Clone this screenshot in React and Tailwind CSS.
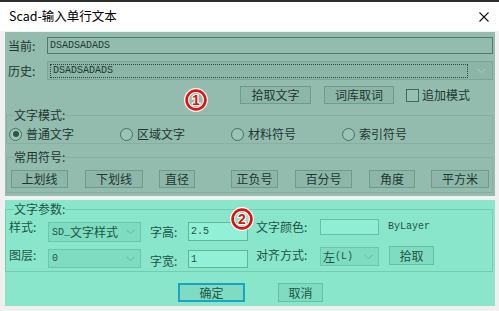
import React from 'react';

const cjk = "font-['Microsoft_YaHei','Noto_Sans_CJK_SC',sans-serif]";
const mono = "font-['Liberation_Mono',monospace]";

function Chevron({ color }) {
    return (
        <svg width="9" height="6" viewBox="0 0 9 6">
            <path d="M0.5 0.8 L4.5 4.8 L8.5 0.8" fill="none" stroke={color} strokeWidth="1" />
        </svg>
    );
}

function Marker({ n }) {
    return (
        <svg width="24" height="24" viewBox="0 0 24 24">
            <circle cx="12" cy="12" r="9.4" fill="none" stroke="#ffffff" strokeWidth="5" />
            <circle cx="12" cy="12" r="9.4" fill="none" stroke="#e3120f" strokeWidth="2.7" />
            <text
                x="12"
                y="17"
                textAnchor="middle"
                fontSize="14"
                fontWeight="700"
                fontFamily="Liberation Sans, sans-serif"
                fill="#e3120f"
                stroke="#ffffff"
                strokeWidth="2.2"
                paintOrder="stroke"
            >
                {n}
            </text>
        </svg>
    );
}

function Radio({ checked, label }) {
    return (
        <div className="flex items-center gap-[4px] h-[14px]">
            <span className="w-[13px] h-[13px] rounded-full border-[1.5px] border-[#46725f] bg-[#9cc3b6] flex items-center justify-center">
                {checked && <span className="w-[6px] h-[6px] rounded-full bg-[#2d5547]" />}
            </span>
            <span>{label}</span>
        </div>
    );
}

function TealBtn({ label, w, ml }) {
    return (
        <div
            className={`h-[18px] border border-[#6f9a8c] bg-[#8db6a9] flex items-center justify-center shrink-0 ${w} ${ml}`}
        >
            {label}
        </div>
    );
}

export default function App() {
    const symbols = [
        { label: '上划线', w: 'w-[57px]', ml: 'ml-[4px]' },
        { label: '下划线', w: 'w-[58px]', ml: 'ml-[17px]' },
        { label: '直径', w: 'w-[36px]', ml: 'ml-[16px]' },
        { label: '正负号', w: 'w-[47px]', ml: 'ml-[36px]' },
        { label: '百分号', w: 'w-[57px]', ml: 'ml-[17px]' },
        { label: '角度', w: 'w-[46px]', ml: 'ml-[17px]' },
        { label: '平方米', w: 'w-[58px]', ml: 'ml-[16px]' },
    ];

    return (
        <div className={`w-[499px] h-[311px] bg-[#f0f0f0] overflow-hidden text-[12px] ${cjk}`}>
            <div className="h-[2px] bg-[#2e2e2e]" />
            <div className="h-[29px] bg-white flex items-center justify-between pl-[9px] pr-[10px]">
                <span className="text-[12.5px] text-black">Scad-输入单行文本</span>
                <svg width="10" height="10" viewBox="0 0 10 10">
                    <path d="M0.5 0.5 L9.5 9.5 M9.5 0.5 L0.5 9.5" stroke="#111" strokeWidth="1.1" />
                </svg>
            </div>

            <div className="pl-[5px] pr-[4px] pt-[1px]">
                {/* upper panel */}
                <div className="relative h-[164px] bg-[#93bcaf] text-[#1e3730] flex flex-col">
                    <div className="flex items-center mt-[5px] h-[17px]">
                        <span className="w-[42px] pl-[3px]">当前:</span>
                        <div className={`w-[446px] h-[17px] border border-[#4e7b6b] flex items-center pl-[2px] text-[10px] text-[#1c3a30] ${mono}`}>
                            DSADSADADS
                        </div>
                    </div>
                    <div className="flex items-center mt-[7px] h-[19px]">
                        <span className="w-[42px] pl-[3px]">历史:</span>
                        <div className="w-[446px] h-[19px] border border-[#7ea497] bg-[#8cb4a7] flex items-center pl-[2px] pr-[6px]">
                            <div className={`flex-1 h-[14px] border border-dotted border-[#2a4a3f] flex items-center pl-[2px] text-[10px] text-[#1c3a30] ${mono}`}>
                                DSADSADADS
                            </div>
                            <div className="w-[18px] flex justify-end">
                                <Chevron color="#b4cbc3" />
                            </div>
                        </div>
                    </div>
                    <div className="flex items-center mt-[6px] h-[18px]">
                        <TealBtn label="拾取文字" w="w-[71px]" ml="ml-[235px]" />
                        <TealBtn label="词库取词" w="w-[70px]" ml="ml-[13px]" />
                        <span className="ml-[12px] w-[13px] h-[13px] border border-[#3f6b5c] bg-[#97c0b3]" />
                        <span className="ml-[3px]">追加模式</span>
                    </div>

                    <fieldset className="mt-[4px] ml-[1px] mr-[2px] border border-[#87b0a2] pb-[2px]">
                        <legend className="ml-[7px] leading-[14px]">文字模式:</legend>
                        <div className="grid grid-cols-[111px_111px_111px_111px] pl-[2px] mt-[5px]">
                            <Radio checked label="普通文字" />
                            <Radio label="区域文字" />
                            <Radio label="材料符号" />
                            <Radio label="索引符号" />
                        </div>
                    </fieldset>

                    <fieldset className="mt-[6px] ml-[1px] mr-[2px] border border-[#87b0a2] pb-[4px]">
                        <legend className="ml-[7px] leading-[14px]">常用符号:</legend>
                        <div className="flex items-center mt-[6px]">
                            {symbols.map((s) => (
                                <TealBtn key={s.label} label={s.label} w={s.w} ml={s.ml} />
                            ))}
                        </div>
                    </fieldset>

                    <div className="absolute left-[179px] top-[56px]">
                        <Marker n="1" />
                    </div>
                </div>

                <div className="h-[4px]" />

                {/* lower panel */}
                <div className="relative h-[106px] bg-[#89e6cb] text-[#1b5544] flex flex-col pt-[2px]">
                    <fieldset className="mr-[2px] border border-[#72cdb2] pb-[2px]">
                        <legend className="ml-[8px] leading-[14px]">文字参数:</legend>
                        <div className="flex items-start h-[23px] mt-[3px] pl-[3px]">
                            <span className="w-[39px] mt-[1px] leading-[14px]">样式:</span>
                            <div className="w-[93px] h-[20px] mt-[3px] border border-[#6cc7ac] bg-[#80dcc1] flex items-center pl-[3px] pr-[5px]">
                                <span className="flex-1 flex items-center">
                                    <span className={`text-[10px] ${mono}`}>SD_</span>
                                    <span>文字样式</span>
                                </span>
                                <Chevron color="#5fb69c" />
                            </div>
                            <span className="w-[38px] ml-[9px] mt-[6px] leading-[14px]">字高:</span>
                            <div className={`w-[60px] h-[19px] mt-[3px] border border-[#5bb89d] bg-[#92f0d6] flex items-center pl-[2px] text-[10px] ${mono}`}>
                                2.5
                            </div>
                            <span className="w-[64px] ml-[8px] mt-[1px] leading-[14px]">文字颜色:</span>
                            <div className="w-[59px] h-[16px] border border-[#63c2a7] bg-[#90eed4]" />
                            <span className={`ml-[9px] mt-[1px] leading-[14px] text-[10px] ${mono}`}>ByLayer</span>
                        </div>
                        <div className="flex items-start h-[23px] mt-[4px] pl-[3px]">
                            <span className="w-[39px] mt-[2px] leading-[14px]">图层:</span>
                            <div className="w-[93px] h-[19px] mt-[3px] border border-[#6cc7ac] bg-[#80dcc1] flex items-center pl-[3px] pr-[5px]">
                                <span className={`flex-1 text-[10px] ${mono}`}>0</span>
                                <Chevron color="#5fb69c" />
                            </div>
                            <span className="w-[38px] ml-[9px] mt-[8px] leading-[14px]">字宽:</span>
                            <div className={`w-[60px] h-[18px] mt-[4px] border border-[#5bb89d] bg-[#92f0d6] flex items-center pl-[2px] text-[10px] ${mono}`}>
                                1
                            </div>
                            <span className="w-[64px] ml-[8px] mt-[2px] leading-[14px]">对齐方式:</span>
                            <div className="w-[59px] h-[19px] mt-[1px] border border-[#6cc7ac] bg-[#80dcc1] flex items-center pl-[2px] pr-[5px]">
                                <span className="flex-1 flex items-center">
                                    <span>左</span>
                                    <span className={`text-[10px] ${mono}`}>(L)</span>
                                </span>
                                <Chevron color="#5fb69c" />
                            </div>
                            <div className="w-[45px] h-[19px] ml-[10px] border border-[#66c0a5] bg-[#80dcc1] flex items-center justify-center">
                                拾取
                            </div>
                        </div>
                    </fieldset>

                    <div className="flex items-center mt-[11px] pl-[173px]">
                        <div className="w-[67px] h-[19px] border-2 border-[#1aa3c6] bg-[#80dcc1] flex items-center justify-center">
                            确定
                        </div>
                        <div className="w-[45px] h-[19px] ml-[33px] border border-[#66c0a5] bg-[#80dcc1] flex items-center justify-center">
                            取消
                        </div>
                    </div>

                    <div className="absolute left-[225px] top-[7px]">
                        <Marker n="2" />
                    </div>
                </div>
            </div>
        </div>
    );
}
